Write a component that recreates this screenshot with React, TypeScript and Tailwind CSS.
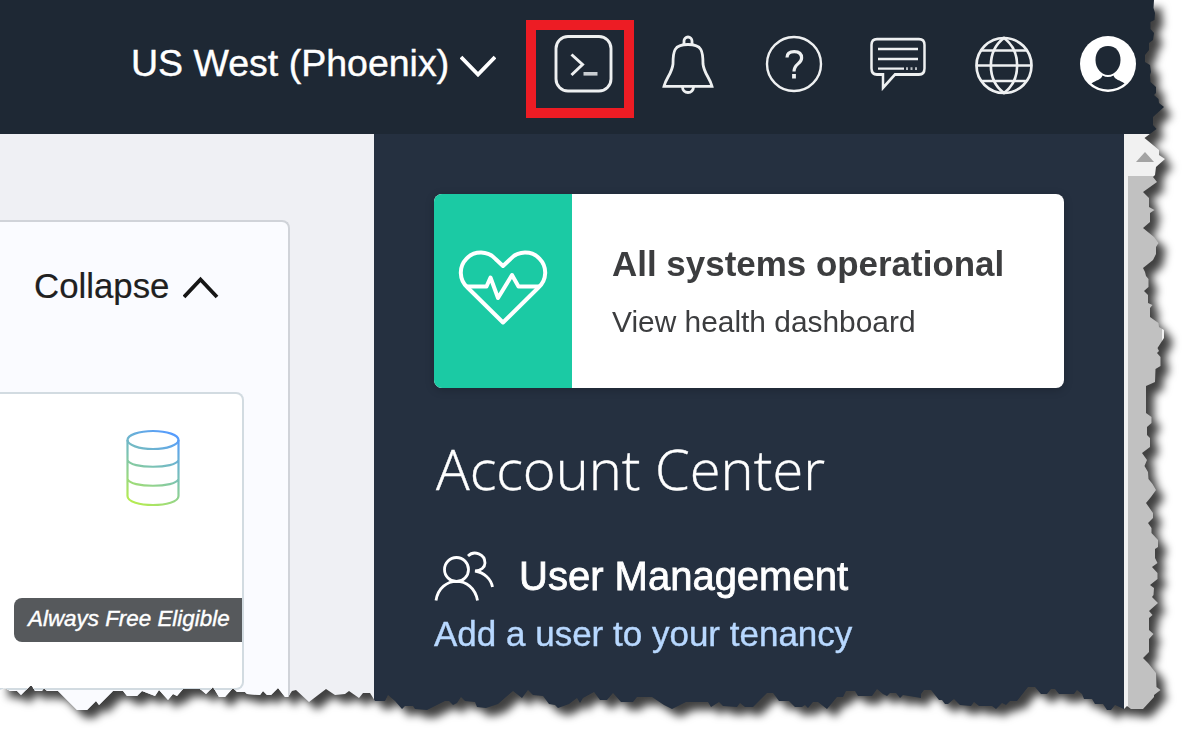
import React from "react";

const RIGHT_EDGE =
  "1154,0 1153.5,8 1155,13 1154.5,20 1150.5,22 1150.5,29 1154,33 1153,40 1149,43 1149,50 1145,55 1145,62 1150,65 1151,72 1150,75 1150.5,82 1156,87 1156,93 1154,95 1158.5,99 1159,103 1164,107 1153,117 1153,125 1156.5,129 1144.5,138 1159,150 1159,155 1165,159 1156,167 1155,175 1153,177 1157,182 1143,192 1149,198 1149,207 1154.5,210 1150,213 1150,222 1143,228 1154,237 1158.5,243 1156,247 1156,254 1153,260 1143,268 1145,272 1146,276 1148.5,279 1148.5,287 1144,291 1148,295 1148,303 1152.5,305 1150,308 1150,317 1158.5,323 1159,327 1164,330 1164,338 1157.5,348 1159,351 1157,353 1160.5,357 1160.5,366 1155.5,369 1155,382 1146,386 1146,413 1151.5,417 1151.5,423 1147,427 1147,435 1150,438 1150,447 1142,453 1147,460 1144.5,466 1148,472 1148.5,479 1152.5,484 1156,490 1151,497 1146,503 1153,513 1153,518 1148,523 1151.5,528 1151.5,533 1158,540 1158,547 1155,549 1155,558 1157.5,563 1152,567 1157.5,573 1157.5,579 1150,585 1154,588 1153.5,595 1152,597 1158,603 1149,611 1152.5,615 1149,618 1149,630 1153.5,634 1149,639 1149,652 1143,658 1148,663 1156,673 1156.5,687 1160.5,690 1154,695 1154,697 1143,709 1131,709 1127,706 1124,709";

const BOTTOM_EDGE =
  "1115,705 1111,710 1107,710 1103,704 1095,704 1092,699 1084,699 1082,694 1077,690 1074,694 1059,694 1055,689 1051,689 1047,694 1041,694 1035,687 1028,687 1017,701 1010,701 1006,705 1002,703 996,709 992,706 979,706 974,702 971,706 960,705 954,699 948,704 945,704 942,700 939,700 931,690 924,690 921,694 921,698 903,695 900,698 896,693 890,693 887,696 883,694 877,689 872,696 858,696 855,691 846,691 843,697 837,697 827,709 818,702 813,702 808,708 805,705 802,707 795,707 789,701 779,701 773,693 767,693 753,707 745,707 740,703 737,707 723,706 719,702 711,707 708,702 686,702 672,709 664,705 652,697 637,697 633,702 621,702 613,693 607,700 600,700 594,692 583,698 580,703 577,698 569,704 558,708 555,705 549,704 543,696 533,695 528,690 522,698 513,691 498,704 486,708 477,707 475,702 465,701 461,697 457,703 453,705 449,701 445,701 427,710 415,709 413,706 405,706 402,709 395,701 388,695 385,701 375,701 370,693 363,693 359,698 349,691 345,694 335,695 326,689 309,702 296,690 292,691 288,697 285,697 278,688 271,695 267,695 263,691 260,695 247,694 245,692 237,692 233,688 225,697 219,697 213,687 206,694 200,689 183,689 177,696 173,694 168,700 159,690 155,696 142,691 137,696 127,696 123,691 113,691 99,705 96,701 87,710 77,710 58,691 47,691 44,688 42,691 35,691 32,686 30,686 25,691 21,695 17,691 10,691 5,688 0,690";

const tornEdge = `polygon(0px 0px, ${`${RIGHT_EDGE} ${BOTTOM_EDGE}`
  .split(" ")
  .map((p) => p.split(",").map((n) => `${n}px`).join(" "))
  .join(", ")})`;

function Header() {
  return (
    <header className="flex h-[134px] w-full shrink-0 items-start bg-[#1e2834] text-white">
      <div className="ml-[131px] mt-[41px] w-[329px] whitespace-nowrap text-[37.5px] leading-[44px] [-webkit-text-stroke:0.4px_#fff]">US West (Phoenix)</div>
      <svg className="mt-[54px] h-6 w-9 shrink-0" viewBox="0 0 36 24" fill="none" stroke="#fff" strokeWidth="3.8">
        <path d="M1 3 18 20.5 35 3" />
      </svg>
      <div className="ml-[30px] mt-5 flex h-[98px] w-[108px] shrink-0 justify-center border-[10px] border-[#ed1c24]">
        <svg className="ml-[6px] mt-[5px] h-[60px] w-[60px] shrink-0" viewBox="0 0 60 60" fill="none" stroke="#eef0f1">
          <rect x="3" y="1.500" width="55" height="54.500" rx="12" strokeWidth="2.9" />
          <path d="M18.500 19.500 29.500 29.500 18.500 40" strokeWidth="3" />
          <path d="M30.500 38.800H44.500" strokeWidth="3.600" stroke="#c9cdd1" />
        </svg>
      </div>
      <svg className="ml-[28px] mt-[34px] h-[62px] w-[54px] shrink-0" viewBox="0 0 54 62" fill="none" stroke="#eef0f1" strokeWidth="2.8">
        <path d="M2 52.300H50C48 44 42 39.500 41 30C41 17 40 10.500 26 10.500S11 17 11 30C10 39.500 4 44 2 52.300Z" />
        <path d="M22 10V7a4 4 0 0 1 8 0V10M20.500 53a5.500 5.500 0 0 0 11 0" />
      </svg>
      <svg className="ml-[49px] mt-[35px] h-[58px] w-[58px] shrink-0" viewBox="0 0 58 58" fill="none" stroke="#eef0f1">
        <circle cx="29" cy="29" r="27" strokeWidth="2.400" />
        <path d="M22 22.500C22 18 25 16.600 29.300 16.600C34 16.600 36.600 19 36.600 23C36.600 29 29 28.500 29 36.500" strokeWidth="3.200" />
        <path d="M29 39V43.500" strokeWidth="3.800" />
      </svg>
      <svg className="ml-[47px] mt-[34px] h-[60px] w-[58px] shrink-0" viewBox="0 0 58 60" fill="none" stroke="#eef0f1" strokeWidth="2.500">
        <path d="M7 4H49Q54.500 4 54.500 9V29Q54.500 34.500 49 34.500H25L13 46V34.500H7Q1.500 34.500 1.500 29V9Q1.500 4 7 4Z" transform="translate(0 .5) scale(1 1.160)" />
        <path d="M8 15H48M8 25H48M8 34.600H34" strokeWidth="2.400" />
        <path d="M36 34.600H48" strokeWidth="2.600" strokeDasharray="2 2.500" opacity=".75" />
      </svg>
      <svg className="ml-[46px] mt-[36px] h-[60px] w-[60px] shrink-0" viewBox="0 0 60 60" fill="none" stroke="#eef0f1" strokeWidth="2.700">
        <circle cx="30" cy="29.500" r="27.500" />
        <path d="M30 2C12.500 15 12.500 44 30 57C47.500 44 47.500 15 30 2Z" />
        <path d="M7 14.500H53M2.500 29.500H57.500M7 45H53" />
      </svg>
      <svg className="ml-[46px] mt-[36px] h-[57px] w-[57px] shrink-0" viewBox="0 0 57 57">
        <circle cx="28" cy="28" r="28" fill="#fff" />
        <path d="M28 10C36 10 40.500 16 40.500 24C40.500 32 35 39 28 39S15.500 32 15.500 24C15.500 16 20 10 28 10Z" fill="#1e2834" />
        <path d="M22.500 39.500Q28 42.500 33.500 39.500C35 44 40 44 44.500 47.500A26 26 0 0 1 11.500 47.500C16 44 21 44 22.500 39.500Z" fill="#1e2834" />
      </svg>
    </header>
  );
}

function MainColumn() {
  return (
    <main className="flex w-[374px] shrink-0 items-start bg-[#eff0f4] pt-[86px]">
      <section className="flex h-[560px] w-[290px] flex-col items-start rounded-tr-lg border-r-2 border-t-2 border-[#d0d3d9] bg-[#fafbff]">
        <div className="ml-[34px] mt-[42px] flex h-[44px] items-start text-[#202020]">
          <span className="w-[149px] whitespace-nowrap text-[34.8px] leading-[44px] [-webkit-text-stroke:0.2px_#202020]">Collapse</span>
          <svg className="mt-[12px] h-[24px] w-[36px]" viewBox="0 0 36 24" fill="none" stroke="#161616" strokeWidth="3.800">
            <path d="M1 21 17.500 3.500 34 21" />
          </svg>
        </div>
        <article className="mt-[84px] flex h-[298px] w-[244px] flex-col items-end rounded-r-lg border-y-2 border-r-2 border-[#d2dbe1] bg-white">
          <svg className="mr-[61px] mt-[35px] h-[78px] w-[56px] shrink-0" viewBox="0 0 56 78" fill="none" stroke="url(#db)" strokeWidth="2.200">
            <defs>
              <linearGradient id="db" gradientUnits="userSpaceOnUse" x1="48" y1="4" x2="8" y2="76">
                <stop offset="0" stopColor="#559bff" />
                <stop offset=".5" stopColor="#7dc4b0" />
                <stop offset="1" stopColor="#b8ee4c" />
              </linearGradient>
            </defs>
            <ellipse cx="28" cy="11" rx="25.500" ry="9" />
            <path d="M2.500 11V67C2.500 79 53.500 79 53.500 67V11M2.500 31C5 40 51 40 53.500 31M2.500 50C5 59 51 59 53.500 50" />
          </svg>
          <div className="mt-[91px] flex h-[44px] w-[228px] items-center whitespace-nowrap rounded-l-lg bg-[#56595c] pb-[2px] pl-[14px] text-[22.4px] italic text-white [-webkit-text-stroke:0.4px_#fff]">
            Always Free Eligible
          </div>
        </article>
      </section>
    </main>
  );
}

function SidePanel() {
  return (
    <aside className="flex w-[750px] shrink-0 flex-col items-start bg-[#253040] pl-[60px] pt-[60px]">
      <div className="flex h-[194px] w-[630px] overflow-hidden rounded-lg bg-white shadow-[0_2px_10px_rgba(0,0,0,0.2)]">
        <div className="flex w-[138px] items-start justify-center bg-[#1bcaa4]">
          <svg className="mt-[55px] h-[78px] w-[90px]" viewBox="0 0 90 78" fill="none" stroke="#fff" strokeWidth="4" strokeLinejoin="round">
            <path d="M45 17 37.500 10A20 20 0 1 0 9.500 38.500L45 73.500 80.500 38.500A20 20 0 1 0 52.500 10Z" />
            <path d="M8 37.500H28.500L32.500 28.500 40 49 54 26 60.500 37.500H82" />
          </svg>
        </div>
        <div className="flex flex-col whitespace-nowrap pl-[40px] pt-[48px] text-[#3c3d3f]">
          <div className="text-[34.950px] font-bold leading-[44px]">All systems operational</div>
          <div className="mt-[16px] text-[29.900px] leading-[40px]">View health dashboard</div>
        </div>
      </div>
      <h1 className="ml-[2px] mt-[44px] h-[70px] whitespace-nowrap font-['Open_Sans',sans-serif] text-[56px] font-light leading-[72px] text-white [-webkit-text-stroke:0.4px_#fff]">
        Account Center
      </h1>
      <div className="mt-[49px] flex h-[63px] items-start text-white">
        <svg className="h-[60px] w-[62px] shrink-0" viewBox="0 0 62 60" fill="none" stroke="#fff" strokeWidth="2.800">
          <circle cx="22.500" cy="18.500" r="12" />
          <path d="M2 49.500C6 24 39 24 43.500 49.500M34 5C40 -1 51 3 51 12C51 16 47 20 41 20C50 21.500 57 28 58.500 36" />
        </svg>
        <h2 className="ml-[23px] mt-[1px] whitespace-nowrap text-[40px] leading-[48px] [-webkit-text-stroke:0.8px_#fff]">User Management</h2>
      </div>
      <a className="whitespace-nowrap text-[35px] leading-[40px] text-[#b8d8ff] [-webkit-text-stroke:0.4px_#b8d8ff]">Add a user to your tenancy</a>
    </aside>
  );
}

function Scrollbar() {
  return (
    <div className="flex w-[62px] shrink-0 flex-col bg-[#f1f1f1] pl-1">
      <div className="flex h-[42px] w-[34px] shrink-0 items-center justify-center pt-[4px]">
        <svg className="h-[10px] w-[18px]" viewBox="0 0 18 10">
          <path d="M0 10 9 0 18 10Z" fill="#a3a3a3" />
        </svg>
      </div>
      <div className="w-[34px] flex-1 bg-[#c1c1c1]" />
    </div>
  );
}

export default function App() {
  return (
    <div className="h-[730px] w-[1186px] overflow-hidden bg-white font-['Liberation_Sans',Arial,sans-serif]">
      <div className="h-full w-full [filter:drop-shadow(8px_8px_4px_rgba(0,0,0,0.75))]">
        <div className="flex h-full w-full flex-col overflow-hidden" style={{ clipPath: tornEdge }}>
          <Header />
          <div className="flex min-h-0 flex-1">
            <MainColumn />
            <SidePanel />
            <Scrollbar />
          </div>
        </div>
      </div>
    </div>
  );
}
